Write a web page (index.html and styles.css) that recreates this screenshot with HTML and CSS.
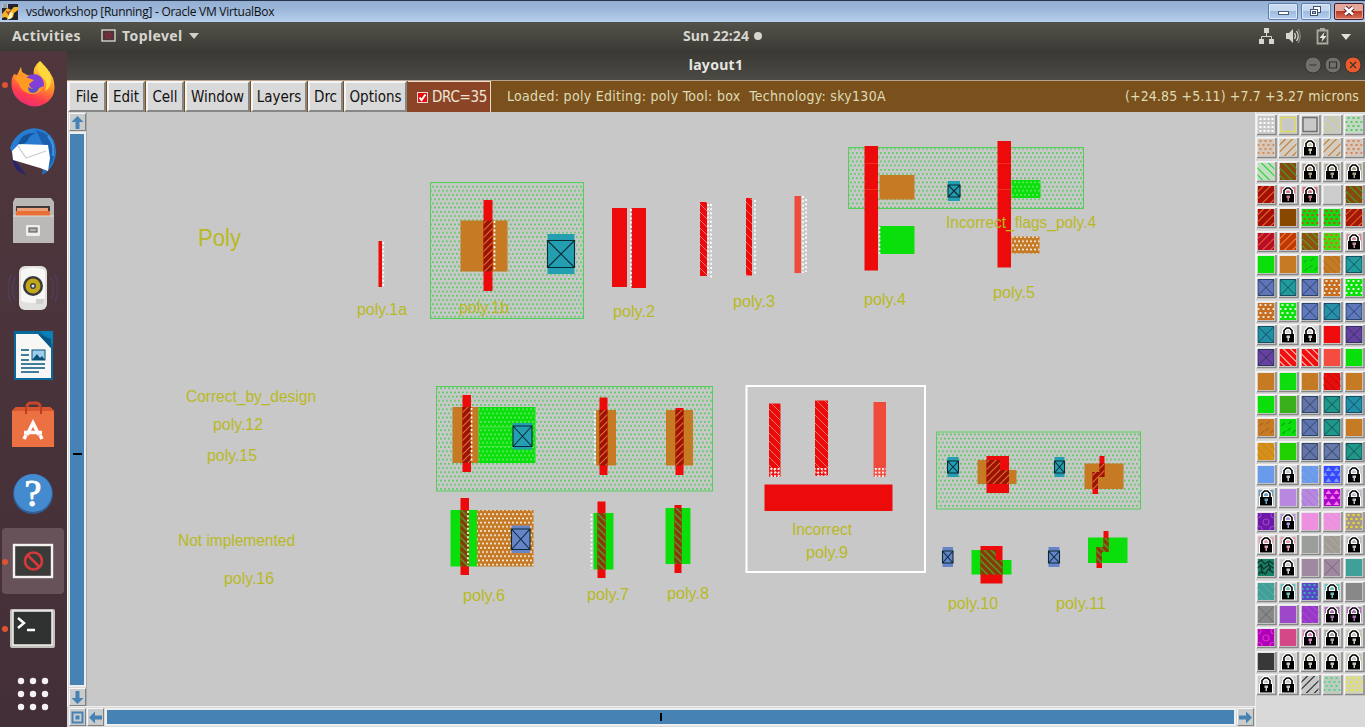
FILE: index.html
```html
<!DOCTYPE html>
<html lang="en">
<head>
<meta charset="utf-8">
<title>vsdworkshop [Running] - Oracle VM VirtualBox</title>
<link rel="stylesheet" href="styles.css">
</head>
<body>
<div class="screen">
  <header class="vbox-bar">
    <svg class="vbox-icon" width="16" height="16" viewBox="0 0 16 16"><rect width="16" height="16" fill="#24242e"/><path d="M0 10l5-6 4 2 3-3h4v3l-4 3-1 4-4 2-4-2-3 1z" fill="#f2b22a"/><path d="M3 6l3 2 3-2-2 6z" fill="#ad3d20"/><path d="M8 8l3 1-1 5-5 2z" fill="#fff3b0"/><rect width="6" height="4" fill="#b9c7d4"/><path d="M1 1h4M1 3h4" stroke="#4b5968" stroke-width=".7"/></svg>
    <span class="vbox-title">vsdworkshop [Running] - Oracle VM VirtualBox</span>
    <div class="win-buttons">
      <span class="win-btn"><svg width="30" height="16"><rect x="10.500" y="8.500" width="10" height="3" fill="#fff" stroke="#4a5c78"/></svg></span>
      <span class="win-btn"><svg width="30" height="16"><g fill="#fff" stroke="#43546e"><rect x="12.500" y="3.500" width="7" height="6"/><rect x="9.500" y="6.500" width="7" height="6"/><rect x="11.500" y="8.500" width="3" height="2" fill="#a9c1df"/></g></svg></span>
      <span class="win-btn close"><svg width="30" height="16"><path d="M11 4.500l8 7M19 4.500l-8 7" stroke="#5d2630" stroke-width="4.500"/><path d="M11 4.500l8 7M19 4.500l-8 7" stroke="#fff" stroke-width="2.600"/></svg></span>
    </div>
  </header>

  <div class="gnome-bar">
    <span class="activities">Activities</span>
    <svg class="app-icon" width="15" height="13"><rect x="1" y="1" width="13" height="11" fill="#50343c" stroke="#deded8" stroke-width="1.300"/><circle cx="7.500" cy="6.500" r="2.600" fill="#6c2b36" stroke="#8f3039"/></svg>
    <span class="toplevel">Toplevel</span>
    <svg class="caret" width="10" height="6"><path d="M0 0h10L5 6z" fill="#d0cfc9"/></svg>
    <span class="clock">Sun 22:24</span><span class="clock-dot"></span>
    <svg class="tray" width="100" height="24" viewBox="0 0 100 24">
      <g fill="#d6d5cf"><rect x="7" y="4" width="5" height="5"/><rect x="2" y="15" width="5" height="5"/><rect x="12" y="15" width="5" height="5"/></g>
      <path d="M9.500 9v3.500M4.500 15v-2.500h10V15" fill="none" stroke="#d6d5cf"/>
      <path d="M29 9h3l4-4v14l-4-4h-3z" fill="#d6d5cf"/><path d="M37.500 9q2 3 0 6M39.500 7q3.500 5 0 10" fill="none" stroke="#d6d5cf" stroke-width="1.300"/><path d="M41 5q4.500 7 0 14" fill="none" stroke="#85837c" stroke-width="1.300"/>
      <path d="M60.500 6.500h10v13h-10zM63 5h5" fill="none" stroke="#a9a8a1" stroke-width="1.800"/><path d="M67.500 8l-5 6h3l-1 4 5-6h-3z" fill="#e8e7e2"/>
      <path d="M84 10h10l-5 6z" fill="#dfded8"/>
    </svg>
  </div>

  <div class="workspace">
    <nav class="dock">
      <div class="dock-item"><i class="run-dot"></i><svg width="50" height="54" viewBox="0 0 50 54"><defs><linearGradient id="fox" x1=".7" y1="0" x2=".3" y2="1"><stop offset="0" stop-color="#ffe83e"/><stop offset=".45" stop-color="#ff9229"/><stop offset=".75" stop-color="#ff3d4e"/><stop offset="1" stop-color="#e62a79"/></linearGradient></defs>
        <path d="M4 20l2-4 3 1 4-8 1 5 5 3 7 1q-2-9 6-15 4 3 7 11l2-1 4 7q5 17-7 25-11 7-23 0Q1 37 4 20z" fill="url(#fox)"/><circle cx="26" cy="26" r="10" fill="#8040d8"/><path d="M6 20q6-4 14 0l6 2-5 4q1 6 8 5l7-3q-3 9-13 8-10-2-12-10z" fill="#ff9a24"/><path d="M20 29q5 4 11-1 0 6-6 7-5 0-5-6z" fill="#5b50c8"/><path d="M32 4q-5 8 2 15 7 5 3 14 7-4 6-13-1-9-11-16z" fill="#ffd93b"/></svg></div>
      <div class="dock-item"><svg width="50" height="54" viewBox="0 0 50 54"><path d="M4 31q1 14 14 18L10 38z" fill="#28246d"/><path d="M14 6Q26-1 37 5q11 7 11 21-1 16-14 23 1-6 2-11L14 20 5 28 2 22Q5 12 14 6z" fill="#277bd1"/><path d="M28 4q18 5 19 20-1 14-12 24 5-13 2-25z" fill="#1b5fae"/><path d="M40 10q7 8 5 20" fill="none" stroke="#3f95e0" stroke-width="2"/><path d="M4 25l7-7 29 1 2 13-2 13L32 42 5 34z" fill="#fff"/><path d="M10 20l8 12 20-7" fill="none" stroke="#c9cdd2" stroke-width="1.300"/><path d="M10 18q4-12 18-11-7 2-8 7-3 5-10 4z" fill="#14539a"/></svg></div>
      <div class="dock-item"><svg width="50" height="54" viewBox="0 0 50 54"><path d="M7 4h36l3 4v41H5V8z" fill="#b9b8b5"/><path d="M8 12h34v14H8z" fill="#413a37"/><path d="M9 14h31v3H9z" fill="#e8a17a"/><path d="M8 17h34v6H8z" fill="#e96f35"/><rect x="5" y="22" width="41" height="27" fill="#bab9b7"/><path d="M5 22h41" stroke="#e1e0de"/><rect x="18" y="31" width="14" height="11" rx="1" fill="#ededeb"/><rect x="21" y="34" width="8" height="4" fill="#b0b0ae" stroke="#55524f"/></svg></div>
      <div class="dock-item"><svg width="50" height="54" viewBox="0 0 50 54"><path d="M7 15q-5 12 0 23M3 13q-6 13 0 27M43 15q5 12 0 23M47 13q6 13 0 27" fill="none" stroke="#4e3d52" stroke-width="2"/><rect x="11" y="4" width="28" height="44" rx="6" fill="#e0e0dd"/><path d="M13 8q12-5 24 0v31q-13 4-24 0z" fill="#f7f7f5"/><circle cx="25" cy="24" r="10" fill="#39393a"/><circle cx="25" cy="24" r="7.500" fill="#c4a719"/><circle cx="25" cy="24" r="3" fill="#39424b"/><circle cx="25" cy="24" r="1.500" fill="#dbe1e6"/><path d="M28 37h9l-3 5h-6z" fill="#d0d0cb"/></svg></div>
      <div class="dock-item"><svg width="50" height="54" viewBox="0 0 50 54"><path d="M6 1h30l9 9v40H6z" fill="#07699c"/><path d="M32 1h13v14z" fill="#0b80b6"/><path d="M8 4h22l13 14v30H8z" fill="#f7f7f5"/><path d="M30 4l13 14V9z" fill="#075686"/><path d="M13 20h8M13 25h8M13 30h8M13 34h24M13 38h24M13 42h18" stroke="#07547d" stroke-width="1.600"/><rect x="24" y="20" width="13" height="10" fill="#9dcdec" stroke="#07547d"/><path d="M24 30l5-6 3 4 2-2 3 4z" fill="#0b4f76"/></svg></div>
      <div class="dock-item"><svg width="50" height="54" viewBox="0 0 50 54"><path d="M19 13V9q0-4 4-4h5q4 0 4 4v4" fill="none" stroke="#c6462c" stroke-width="3"/><path d="M8 9h34l4 4v36H4V13z" fill="#ec7142"/><path d="M4 13l4-4h34l4 4z" fill="#d95530"/><path d="M18 16V9M33 16V9" fill="none" stroke="#bb3d24" stroke-width="2"/><path d="M19 37l6-12 6 12" fill="none" stroke="#fff" stroke-width="3.500"/><path d="M16 34.500h18M16 41l2-4M34 41l-2-4" fill="none" stroke="#fff" stroke-width="3.500"/></svg></div>
      <div class="dock-item"><svg width="50" height="54" viewBox="0 0 50 54"><circle cx="25" cy="28" r="20" fill="#305d92"/><circle cx="25" cy="27" r="19" fill="#438ace"/><text x="25" y="40" text-anchor="middle" font-family="Liberation Serif,serif" font-size="38" fill="#fff" stroke="#fff">?</text></svg></div>
      <div class="dock-item active"><i class="run-dot"></i><svg width="50" height="54" viewBox="0 0 50 54"><rect x="6" y="11" width="38" height="32" fill="#3a3a39" stroke="#f3f2f1" stroke-width="2.400"/><circle cx="25.500" cy="27" r="8.500" fill="none" stroke="#d3393b" stroke-width="2.700"/><path d="M19.500 21l12 12" stroke="#d3393b" stroke-width="2.700"/></svg></div>
      <div class="dock-item"><i class="run-dot"></i><svg width="50" height="54" viewBox="0 0 50 54"><rect x="2" y="7" width="45" height="39" rx="2" fill="#c3c0be"/><rect x="5" y="9" width="39" height="34" fill="#303232" stroke="#f1f0ef" stroke-width="1.500"/><path d="M10 16l6 5-6 5M19 28h8" fill="none" stroke="#fff" stroke-width="2.400"/></svg></div>
      <div class="dock-item"><svg width="50" height="54" viewBox="0 0 50 54"><g fill="#f6f2f4"><circle cx="13" cy="11" r="3.200"/><circle cx="25" cy="11" r="3.200"/><circle cx="37" cy="11" r="3.200"/><circle cx="13" cy="24" r="3.200"/><circle cx="25" cy="24" r="3.200"/><circle cx="37" cy="24" r="3.200"/><circle cx="13" cy="37" r="3.200"/><circle cx="25" cy="37" r="3.200"/><circle cx="37" cy="37" r="3.200"/></g></svg></div>
    </nav>

    <main class="app">
      <div class="app-title"><span>layout1</span>
        <svg class="app-controls" width="60" height="18"><g stroke="#37352f"><circle cx="11" cy="9" r="8" fill="#71706a"/><circle cx="31" cy="9" r="8" fill="#71706a"/><circle cx="51" cy="9" r="8" fill="#ec5a2c"/></g><path d="M7.500 9h7M27.500 6h7v6h-7zM48 6l6 6M54 6l-6 6" fill="none" stroke="#34332d" stroke-width="1.200"/></svg>
      </div>
      <div class="toolbar">
        <span class="menu m-file">File</span><span class="menu m-edit">Edit</span><span class="menu m-cell">Cell</span><span class="menu m-window">Window</span><span class="menu m-layers">Layers</span><span class="menu m-drc">Drc</span><span class="menu m-options">Options</span>
        <span class="drc-count"><svg width="11" height="11"><rect x=".5" y=".5" width="10" height="10" fill="#e20d0d" stroke="#eed5cc"/><path d="M2.500 5.500l2 2.500 4-5.500" fill="none" stroke="#fff" stroke-width="2"/></svg><b>DRC=35</b></span>
        <span class="status">Loaded: poly Editing: poly Tool: box&nbsp; Technology: sky130A</span>
        <span class="coords">(+24.85 +5.11) +7.7 +3.27 microns</span>
      </div>
      <div class="editor">
        <div class="vscroll">
          <span class="arrow"><svg width="13" height="15"><path d="M6.500 1l6 6h-4v7h-4V7h-4z"/></svg></span>
          <span class="vtrack"><i></i></span>
          <span class="arrow"><svg width="13" height="15"><path d="M6.500 14l6-6h-4V1h-4v7h-4z"/></svg></span>
        </div>
        <svg class="canvas" id="layout" width="1168" height="594" viewBox="87 112 1168 594"></svg>
        <div class="hscroll">
          <span class="arrow"><svg width="13" height="15"><path class="zoom-frame" d="M1.500 2.500h10v10h-10z"/><rect x="4.500" y="5.500" width="4" height="4"/></svg></span>
          <span class="arrow"><svg width="13" height="15"><path d="M0 7.500l6-6v4h7v4H6v4z"/></svg></span>
          <span class="htrack"><i></i></span>
          <span class="arrow"><svg width="13" height="15"><path d="M13 7.500l-6-6v4H0v4h7v4z"/></svg></span>
        </div>
        <div class="palette" id="palette"></div>
      </div>
    </main>
  </div>
</div>
<script src="script.js"></script>
</body>
</html>
```
FILE: styles.css
```css
* { box-sizing: border-box; }
body { margin: 0; background: #c8c8c8; overflow: hidden; }
.screen { width: 1365px; height: 727px; display: flex; flex-direction: column; overflow: hidden; }
svg { display: block; flex: none; }

.vbox-bar { height: 22px; display: flex; align-items: center; padding-left: 2px; border-top: 1px solid #27344d; background: linear-gradient(#94afd2, #9db8da 45%, #b9d1ee); font: 12px "Open Sans", sans-serif; color: #101010; }
.vbox-title { margin-left: 8px; width: 600px; letter-spacing: -.27px; white-space: nowrap; }
.win-buttons { display: flex; gap: 3px; margin-left: auto; padding-right: 1px; }
.win-btn { width: 30px; height: 17px; border: 1px solid #607ba5; border-radius: 2px; background: linear-gradient(#c6d9ef 50%, #9dbbe0 50%, #b7d1ef); box-shadow: inset 0 0 0 1px #dceafa; }
.win-btn.close { border-color: #43202e; background: linear-gradient(#e4a79a 45%, #bb3d29 50%, #d8715c); box-shadow: inset 0 0 0 1px #e9a69c; }
.win-btn svg { margin: -1px; }

.gnome-bar { height: 29px; display: flex; align-items: center; padding: 0 0 2px 12px; background: linear-gradient(#53524a, #3c3a35); color: #d6d5cf; font: bold 14px "Noto Sans", sans-serif; }
.activities { width: 68px; letter-spacing: .38px; }
.app-icon { margin-left: 21px; }
.toplevel { margin-left: 6px; width: 62px; letter-spacing: .4px; }
.caret { margin-left: 5px; }
.clock { margin-left: 484px; width: 67px; white-space: nowrap; letter-spacing: .05px; }
.clock-dot { width: 8px; height: 8px; border-radius: 50%; background: #d6d5cf; margin-left: 4px; }
.tray { margin-left: auto; margin-right: 8px; }

.workspace { flex: 1; display: flex; min-height: 0; }
.dock { width: 67px; flex: none; background: linear-gradient(#50373d, #432f38); display: flex; flex-direction: column; }
.dock-item { height: 68px; flex: none; display: flex; align-items: center; position: relative; padding-left: 8px; }
.dock-item.active { background: #67525a; margin: 0 3px 0 2px; border-radius: 4px; padding-left: 6px; height: 66px; margin-top: 1px; margin-bottom: 1px; }
.run-dot { position: absolute; left: 2px; top: 31px; width: 6px; height: 6px; border-radius: 50%; background: #de5430; }
.active .run-dot { left: 0; }

.app { flex: 1; min-width: 0; display: flex; flex-direction: column; }
.app-title { height: 30px; display: flex; position: relative; align-items: center; justify-content: center; background: linear-gradient(#3a3833, #4b4a44); border-bottom: 1px solid #b9a38f; color: #e7e6e0; font: bold 14px "Noto Sans", sans-serif; letter-spacing: .3px; }
.app-title span { position: relative; top: -1px; }
.app-controls { position: absolute; right: 3px; top: 5px; }
.toolbar { height: 31px; display: flex; background: #7a501d; font: 15px "DejaVu Sans Condensed", "DejaVu Sans", sans-serif; font-stretch: condensed; color: #111; border-left: 1px solid #eee; }
.menu { height: 31px; margin-right: 1px; background: #d9d9d9; border: 2px solid; border-color: #f4f4f4 #868686 #868686 #f4f4f4; display: flex; align-items: center; justify-content: center; }
.m-file { width: 38px; } .m-edit { width: 38px; } .m-cell { width: 38px; } .m-window { width: 65px; } .m-layers { width: 56px; } .m-drc { width: 35px; } .m-options { width: 63px; }
.drc-count { width: 83px; display: flex; align-items: center; padding-left: 9px; background: #8b4526; color: #eee5d8; border-right: 1px solid #e9ddd0; border-top: 1px solid #e9ddd0; }
.drc-count b { font-weight: normal; margin-left: 4px; letter-spacing: -.3px; }
.status, .coords { line-height: 31px; color: #dedcb5; white-space: nowrap; font-size: 14px; }
.status { margin-left: 16px; letter-spacing: .3px; }
.coords { margin-left: auto; margin-right: 6px; letter-spacing: .12px; }

.editor { height: 615px; display: grid; grid-template: 594px 21px / 20px 1168px 110px; background: #d9d9d9; }
.vscroll { display: flex; flex-direction: column; align-items: center; border-left: 1px solid #fff; border-right: 1px solid #aaa; padding-top: 1px; }
.arrow { width: 17px; height: 18px; flex: none; border: 1px solid; border-color: #f6f6f6 #808080 #808080 #f6f6f6; background: #c9cccd; display: flex; align-items: center; justify-content: center; }
.arrow path, .arrow rect { fill: #4682b4; }
.arrow .zoom-frame { fill: none; stroke: #4682b4; stroke-width: 2; }
.vtrack { flex: 1; width: 17px; margin: 1px 0; background: #4682b4; border: 2px solid #eee; border-left-width: 1px; position: relative; }
.vtrack i { position: absolute; left: 3px; top: 319px; width: 9px; height: 2px; background: #000; }
.hscroll { grid-column: 1 / 3; grid-row: 2; display: flex; align-items: center; gap: 1px; padding-left: 2px; padding-right: 1px; border-top: 1px solid #eee; }
.htrack { flex: 1; height: 18px; background: #4682b4; border: 2px solid #eee; position: relative; }
.htrack i { position: absolute; left: 553px; top: 3px; width: 2px; height: 8px; background: #000; }
.canvas { background: #c8c8c8; }
.label { font-family: "Liberation Sans", Arial, sans-serif; font-size: 16px; fill: #b9b91f; }
.palette { grid-column: 3; grid-row: 1 / 3; display: grid; grid-template-columns: repeat(5, 22px); grid-template-rows: repeat(25, 23.33px); padding-top: 2px; border-left: 1px solid #eee; }
```
FILE: script.js
```js
const px = (x, y, w, h, fill) => `<rect x="${x}" y="${y}" width="${w}" height="${h}" fill="${fill}"/>`;
const hatch = (id, s, color, width, dir) =>
  `<pattern id="${id}" width="${s}" height="${s}" patternUnits="userSpaceOnUse"><path d="${dir === '/' ? `M-1 ${s + 1}L${s + 1} -1M-1 1L1 -1M${s - 1} ${s + 1}L${s + 1} ${s - 1}` : `M-1 -1L${s + 1} ${s + 1}M${s - 1} -1L${s + 1} 1M-1 ${s - 1}L1 ${s + 1}`}" stroke="${color}" stroke-width="${width}"/></pattern>`;
const stipple = (id, color, w = 4.2, h = 8.5, dw = 2, dh = 1.6) =>
  `<pattern id="${id}" width="${w}" height="${h}" patternUnits="userSpaceOnUse">${px(0, 1, dw, dh, color)}${px(w / 2, h / 2 + 1, dw, dh, color)}</pattern>`;

const layout = document.getElementById('layout');
const out = [`<defs>
${stipple('well', '#4fcc5a', 4, 8.4, 1.8, 1.6)}${stipple('white', '#f3eee8', 4, 8.4)}${stipple('faint', '#5ce85f', 4, 8.4)}
${hatch('or', 7, '#d9702e', 1.2, '/')}${hatch('gr', 7, '#55982a', 1.5, '\\')}${hatch('wr', 8, '#f3a59a', .7, '\\')}
<pattern id="wd" width="3.6" height="3.6" patternUnits="userSpaceOnUse">${px(0, 0, 2, 2, '#fff')}</pattern></defs>`];
const R = (x1, y1, x2, y2, f) => out.push(px(x1, y1, x2 - x1, y2 - y1, f));
const RED = '#ed0a0a', OR = '#c67a24', GR = '#0bdf0b';
const well = (x1, y1, x2, y2) => out.push(`<rect x="${x1}" y="${y1}" width="${x2 - x1}" height="${y2 - y1}" fill="url(#well)" stroke="#55cf5c"/>`);
const dots = (x, y1, y2) => out.push(`<path d="M${x} ${y1}V${y2}" stroke="#fff" stroke-width="1.7" stroke-dasharray="2 2.2"/>`);
const contact = (x1, y1, x2, y2, e, f) => {
  R(x1, y1 - e, x2, y2 + e, f);
  out.push(`<path d="M${x1} ${y1}H${x2}V${y2}H${x1}zL${x2} ${y2}M${x2} ${y1}L${x1} ${y2}" fill="none" stroke="#082b36" stroke-width="1.1"/>`);
};
const over = (x1, y1, x2, y2, base, pat) => { R(x1, y1, x2, y2, base); R(x1, y1, x2, y2, `url(#${pat})`); };
const TEAL = '#249fb1', BLUE = '#6684c7', DARK = '#9c1205', BROWN = '#883c05';

R(378.5, 241, 382, 287, RED); dots(383.3, 242, 287);
well(430.5, 182.5, 583.5, 318.5);
R(460.500, 220.5, 507.5, 271.5, OR); R(483.5, 200, 492.5, 291, RED);
over(483.5, 220.5, 492.5, 271.5, DARK, 'or'); dots(494.5, 221, 271);
contact(547.500, 240.5, 574.5, 267.5, 6.500, TEAL);
R(612, 208, 627, 287, RED); R(631.5, 208, 646, 288, RED); dots(631, 209, 286);

over(700, 202, 707, 276, RED, 'wr'); dots(708, 204, 276); dots(711, 204, 279);
over(746, 198, 752, 275.5, RED, 'wr'); dots(755, 200, 275);
R(794.5, 196, 801, 273, '#f04a3c'); dots(803, 196, 273); dots(806, 199, 272);

well(848.5, 147.5, 1083.5, 208.5);
R(864.5, 146, 878, 270.5, RED); R(879.5, 175, 914.5, 199.5, OR); R(879.5, 226, 914.500, 254, GR); dots(879.5, 227, 254);
contact(948, 185, 960, 197, 4, TEAL);
R(997.500, 141, 1011, 267.5, RED);
over(1011.5, 180, 1040.5, 198, GR, 'faint'); over(1011.5, 236.5, 1039.5, 253.500, OR, 'white');
out.push('<path d="M864.500 163.500h13.500M864.500 189.500h13.500M997.500 163.500h13.500M997.500 189.500h13.500" stroke="#f3482f" stroke-width=".6"/>');

well(436.5, 386.5, 712.5, 491);
R(452.5, 407, 478.500, 463, OR); over(478.5, 407, 535.5, 463, GR, 'faint');
R(478.5, 426.5, 535.5, 427.500, '#4bdf48'); R(478.5, 446, 535.5, 447, '#4bdf48');
R(462.5, 395, 471, 472, RED); over(462.5, 407, 471, 463, DARK, 'or'); dots(471.5, 408, 462);
contact(513, 426, 532, 446.5, 3, TEAL);
R(596, 410, 616, 465.5, OR); R(599.5, 397.5, 607.500, 475, RED); over(599.5, 410, 607.500, 465.5, DARK, 'or'); dots(595, 411, 465);
R(666, 410, 693, 465.5, OR); R(675.500, 408, 683.5, 475, RED); over(675.500, 410, 683.5, 465.5, DARK, 'or');

R(450.5, 510, 477, 566.5, GR); over(477, 510, 533.5, 566.5, OR, 'white');
R(460.5, 498, 469, 575, RED); over(460.5, 510, 469, 566.500, BROWN, 'gr'); dots(468, 511, 566);
contact(511.5, 529, 530, 549.5, 3.500, BLUE);
R(593.500, 513, 613.500, 569.5, GR); R(597.5, 501.500, 605.5, 578, RED); over(597.5, 513, 605.5, 569.5, BROWN, 'gr'); dots(591.5, 514, 569);
R(665.5, 508, 690.5, 564, GR); R(674.500, 505, 681.5, 573, RED); over(674.500, 508, 681.5, 564, BROWN, 'gr');

out.push('<rect x="746.500" y="386" width="178.500" height="186" fill="none" stroke="#fff" stroke-width="2"/>');
over(769, 403.5, 780.500, 477, RED, 'wr'); over(815, 400.500, 828, 476, RED, 'wr'); R(873.5, 402, 886, 477, '#f04a3c');
R(769, 467, 780.5, 477, 'url(#wd)'); R(815, 467, 828, 476, 'url(#wd)'); R(873.5, 467, 886, 477, 'url(#wd)');
R(764.5, 484.5, 892.5, 511, RED);

well(936.5, 432, 1140.5, 509);
contact(947.5, 461, 958.500, 473, 4, TEAL); contact(1054.5, 461, 1064.500, 473, 4, TEAL);
const poly = (d, f) => out.push(`<path d="${d}" fill="${f}"/>`);
poly('M977.500 460H1000V470H1016.500V484H977.500z', OR); R(986.5, 456, 1009, 493, RED);
poly('M986.500 460H1000V470H1009V484H986.500z', DARK); poly('M986.500 460H1000V470H1009V484H986.500z', 'url(#or)');
R(1084.5, 463.5, 1123.500, 489, OR);
const jog = 'M1099.500 456H1104.500V477H1098V494H1092.500V472H1099.500z';
poly(jog, RED); poly('M1099.500 463.500H1104.500V477H1098V489H1092.500V472H1099.500z', DARK); poly('M1099.500 463.500H1104.500V477H1098V489H1092.500V472H1099.500z', 'url(#or)');
contact(942.5, 551, 953, 563, 4, BLUE); contact(1048.5, 551, 1059.5, 563, 4, BLUE);
poly('M971.500 550H996V560H1011.500V574.500H971.500z', GR); R(980.5, 546, 1002.5, 583.5, RED);
poly('M980.500 550H996V560H1002.500V574.500H980.500z', BROWN); poly('M980.500 550H996V560H1002.500V574.500H980.500z', 'url(#gr)');
R(1088, 537.5, 1127.5, 563, GR);
poly('M1103.500 531H1108.500V552H1102V568H1096.500V547H1103.500z', RED); poly('M1103.500 538H1108.500V552H1102V563H1096.500V547H1103.500z', BROWN); poly('M1103.500 538H1108.500V552H1102V563H1096.500V547H1103.500z', 'url(#gr)');

[['Poly', 198, 246, 43, 23], ['poly.1a', 357, 315, 50], ['poly.1b', 459, 313, 50], ['poly.2', 613, 317, 42], ['poly.3', 733, 307, 42],
 ['poly.4', 864, 305, 42], ['poly.5', 993, 298, 42], ['Incorrect_flags_poly.4', 946, 228, 150], ['Correct_by_design', 186, 402, 130],
 ['poly.12', 213, 430, 50], ['poly.15', 207, 461, 50], ['Not implemented', 178, 546, 117], ['poly.16', 224, 584, 50],
 ['poly.6', 463, 601, 42], ['poly.7', 587, 600, 42], ['poly.8', 667, 599, 42], ['Incorrect', 792, 535, 60], ['poly.9', 806, 558, 42],
 ['poly.10', 948, 609, 50], ['poly.11', 1056, 609, 50]
].forEach(([t, x, y, w, s = 16]) => out.push(`<text class="label" x="${x}" y="${y}" style="font-size:${s}px" textLength="${w}" lengthAdjust="spacingAndGlyphs">${t}</text>`));
layout.innerHTML = out.join('');

/* Layer swatches, "kind base mark": s solid, d dots, r rising hatch, f falling hatch, m ticks,
   x crossed, o outline, t triangles, c circles, q squiggle, L locked. */
const rows = [
  'g c8c8c8 ffffff|o c8c8c8 dcdc60|o c8c8c8 707070|f c8c8c8 d0d080|d c4d8c4 50c860',
  'd d8c6b8 c89060|r d4ccc0 c08030|L c8c8b8|r d4ccc0 c08030|d d8c6b8 d0845c',
  'f c4dcc0 20d838|f 884810 40a028|L a8a08a|L a8a08a|L a8a08a',
  'r a41008 e06828|L d07888|L d07888|s cccccc|f 884810 40a028',
  'r a41008 e06828|s 884800|d 14d814 c05010|d 14d814 c05010|r a41808 e06020',
  'r b80c28 e05828|r c03808 f08028|f 905010 58a028|d 48d814 d06c20|L c89098',
  's 0bdf0b|s c67a24|m 0bdf0b 208830|f c67a24 b47025|x 209c9c',
  'x 6074b8|x 209c9c|x 6074b8|d c86c20 f0e8d8|d 0be00b e0f4e0',
  'd c86c20 f0e8d8|d 0be00b e0f4e0|x 6078bc|x 2890a8|x 6078bc',
  'x 2090a4|L d0d0d0|L d0d0d0|s f00c0c|x 6840a0',
  'x 6840a0|f f01010 ffc0b8|f f01010 ffc0b8|s f44c40|s 0bdf0b',
  's c67a24|m 0bdf0b 38c838|m c67a24 a97830|f e80c0c c01010|s c67a24',
  's 0bdf0b|s 38b01c|x 6474a8|x 209888|x 2090a8',
  'm c67a24 905828|m 0bdf0b 107820|x 6074b0|x 209888|s c67a24',
  'f d49018 c88818|s 20d000|x 6474a8|x 6878a8|x 209888',
  's 6a9aec|L c0c8d8|f 6a9aec 7ca2e0|t 3848ff 7898f0|L c0c8d8',
  'L 70a0c0|s b888e0|f b888e0 a880d0|t a808c8 ff78f0|L c0b8cc',
  'c 6c18a8 a040c8|L b098cc|s ee90e0|f ee90e0 e6a0d8|d a89888 e8e030',
  'L e0a0b0|L e0a0b0|s 9c9e9c|f a09c94 aea89e|L b8bcbc',
  'q 188068 103828|L c8c8c8|s a088a0|X a088a0|s 40a098',
  'f 40a098 58a8a0|L 70c0b8|d 5848c8 40b0a8|L 70c0b8|s 888888',
  'X 888888|s 9c48c8|f 9838c8 a848d0|L b070b8|L b070b8',
  'c b000b8 d830d0|s d44888|L d888c0|L a8a8a8|L c8c8b8',
  's 383838|L c8c8c8|L c8c8b8|L c8c8b8|L c8c8b8',
  'L c8c8c8|L c8c8c8|r c8c8c8 303030|d c0ccb8 50d0a8|d d4d4b0 e8e838'
];
const marks = {
  s: () => '',
  g: c => [2, 6, 10, 14].map(y => [2, 6, 10, 14].map(x => px(x, y, 2, 2, c)).join('')).join(''),
  d: c => [1, 5, 9, 13].map((y, i) => [1, 6, 11, 16].map(x => px(x + (i % 2 ? -1 : 1), y, 2, 2, c)).join('')).join(''),
  r: c => `<path d="M-2 8L8-2M-2 15L15-2M4 18L19 3M11 19l8-8" stroke="${c}" stroke-width="1.2"/>`,
  f: c => `<path d="M9-2l12 12M2-2l17 17M-2 3l17 17M-2 10l9 9" stroke="${c}" stroke-width="1.2"/>`,
  m: c => `<path d="M2 7l3-3M9 5l3-3M8 12l3-3M3 15l3-3M13 14l3-3" stroke="${c}"/>`,
  x: () => '<path d="M1 1l15 15M16 1L1 16M.5.5h16v16H.5z" fill="none" stroke="#16304c" stroke-opacity=".7"/>',
  X: () => '<path d="M1 1l15 15M16 1L1 16" fill="none" stroke="#555" stroke-opacity=".6"/>',
  o: c => `<path d="M1.500 1.500h14v14h-14z" fill="none" stroke="${c}" stroke-width="1.500"/>`,
  t: c => `<path d="M2 5l3-4 3 4zM10 5l3-4 3 4zM6 10l3-4 3 4zM0 10l2-4 2 4zM14 10l2-4 1 4zM2 16l3-4 3 4zM10 16l3-4 3 4z" fill="${c}"/>`,
  c: c => `<g fill="none" stroke="${c}" stroke-width="1.200"><circle cx="8.500" cy="9" r="3"/><circle cx="1" cy="2" r="2.500"/><circle cx="16" cy="2" r="2.500"/><circle cx="2" cy="16" r="2.500"/><circle cx="15" cy="16" r="2.500"/></g>`,
  q: c => `<path d="M0 4l4-3 3 4 5-3 4 3M0 9l4-3 2 4 5-4 5 3M1 15l3-3 4 3 3-5 5 4M3 5l2 10M11 3l2 8" fill="none" stroke="${c}" stroke-width="1.300"/>`,
};
const lock = c => px(1, 1, 15, 15, '#' + c) + `<path d="M4.500 8V4.500L7 2h3l2.500 2.500V8" fill="none" stroke="#fff" stroke-width="4"/><path d="M2 7.500h13V17H2z" fill="#000" stroke="#fff"/><path d="M4.500 8V4.500L7 2h3l2.500 2.500V8" fill="none" stroke="#000" stroke-width="1.600"/><path d="M7 9.500h3.500v2.500h-1v3H8v-3H7z" fill="#${c}"/>`;
document.getElementById('palette').innerHTML = rows.flatMap(r => r.split('|')).map(cell => {
  const [kind, base, mark] = cell.split(' ');
  const body = kind === 'L' ? px(0, 0, 17, 17, '#d4d4d0') + lock(base) : px(0, 0, 17, 17, '#' + base) + marks[kind]('#' + mark);
  return `<svg width="22" height="23"><path d="M.500 21V.500H21" fill="none" stroke="#f4f4f4" stroke-width="2"/><path d="M1 20.500H20V1" fill="none" stroke="#858585" stroke-width="1.500"/><svg x="1.500" y="2" width="17" height="17">${body}</svg></svg>`;
}).join('');
```
